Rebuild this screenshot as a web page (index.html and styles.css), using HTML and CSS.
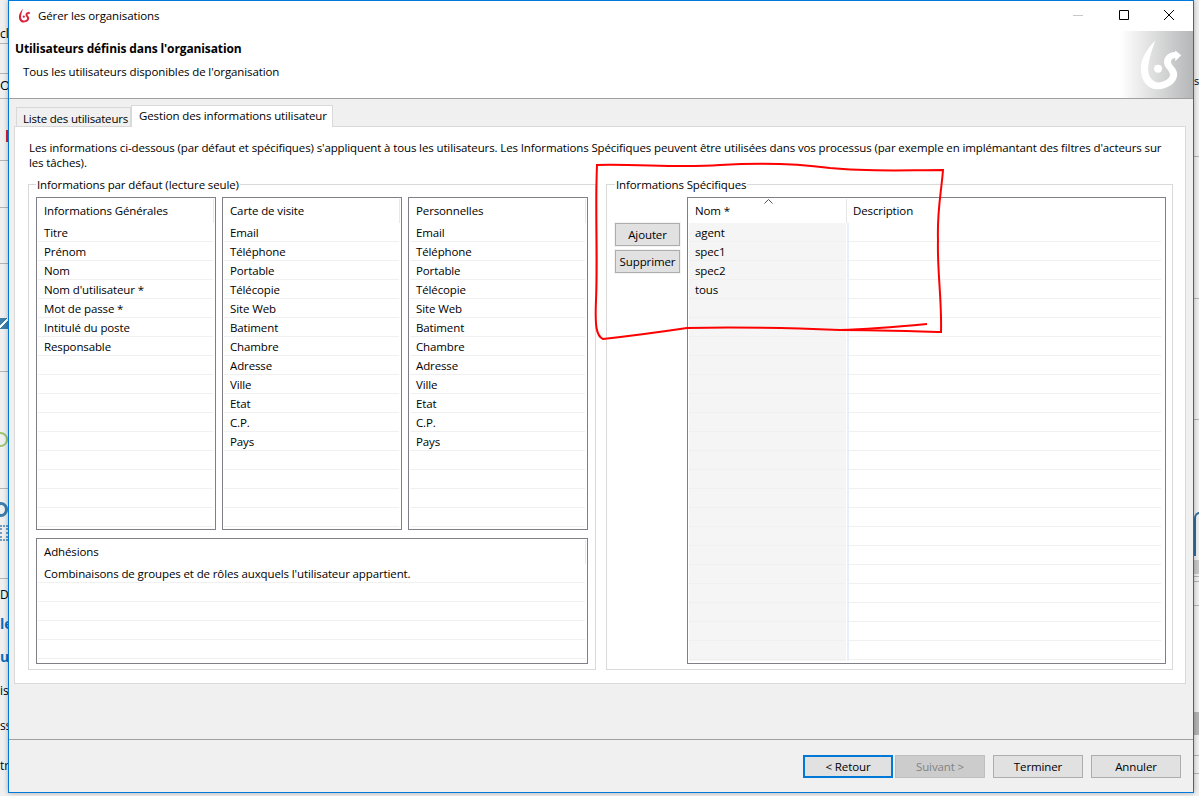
FILE: index.html
```html
<!DOCTYPE html>
<html lang="fr">
<head>
<meta charset="utf-8">
<title>Gérer les organisations</title>
<link rel="stylesheet" href="styles.css">
</head>
<body>
<div class="desktop">
  <div class="bit line l1"></div><div class="bit line l2"></div><div class="bit line l3"></div><div class="bit line l4"></div><div class="bit line l5"></div><div class="bit line l6"></div><div class="bit line l7"></div><div class="bit line l8"></div><div class="bit line l9"></div>
  <div class="bit frag f1">cl</div><div class="bit frag f2">O</div><div class="bit frag f3">De</div><div class="bit frag f4 blue">le</div><div class="bit frag f5 blue">un</div><div class="bit frag f6">is</div><div class="bit frag f7">ss</div><div class="bit frag f8">tr</div>
  <div class="bit redmark"></div>
  <div class="bit mailicon"></div>
  <div class="bit greenicon"></div>
  <div class="bit ringicon"></div>
  <div class="bit snowicon"></div>
  <div class="bit frag f9">s</div>
  <div class="bit line r1"></div><div class="bit line r2"></div><div class="bit line r3"></div><div class="bit line r4"></div><div class="bit line r5"></div><div class="bit line r6"></div><div class="bit line r7"></div><div class="bit line r8"></div>
  <div class="bit rcurve"></div><div class="bit rblock1"></div><div class="bit rblock2"></div>

  <div class="window">
    <div class="titlebar">
      <svg class="app-icon" viewBox="0 0 135 160" aria-hidden="true"><path class="logo-red" d="M52 7C30 30 8 60 8 92C8 130 30 155 58 155C92 155 118 132 118 110C118 92 100 84 99 72C99 64 106 60 112 60L112 70L130 52L112 38L112 42C92 42 78 56 78 72C78 92 96 96 96 112C96 124 76 134 60 134C44 134 30 116 30 96C30 68 44 30 52 7Z"/><circle class="logo-red" cx="60" cy="93" r="12"/></svg>
      <span class="window-title">Gérer les organisations</span>
      <div class="controls">
        <span class="ctl"><svg viewBox="0 0 10 10" class="ctl-svg"><path class="min" d="M0 5.5h10"/></svg></span>
        <span class="ctl"><svg viewBox="0 0 10 10" class="ctl-svg"><path class="max" d="M.5.5h9v9h-9z"/></svg></span>
        <span class="ctl"><svg viewBox="0 0 10 10" class="ctl-svg"><path class="max" d="M0 0l10 10M10 0L0 10"/></svg></span>
      </div>
    </div>
    <header class="banner">
      <div class="banner-text">
        <h1>Utilisateurs définis dans l'organisation</h1>
        <p>Tous les utilisateurs disponibles de l'organisation</p>
      </div>
      <div class="banner-logo">
        <svg class="big-logo" viewBox="0 0 135 160" aria-hidden="true"><path class="logo-white" d="M52 7C30 30 8 60 8 92C8 130 30 155 58 155C92 155 118 132 118 110C118 92 100 84 99 72C99 64 106 60 112 60L112 70L130 52L112 38L112 42C92 42 78 56 78 72C78 92 96 96 96 112C96 124 76 134 60 134C44 134 30 116 30 96C30 68 44 30 52 7Z"/><circle class="logo-white" cx="60" cy="93" r="12"/></svg>
      </div>
    </header>
    <main class="main">
      <div class="tabs">
        <div class="tab">Liste des utilisateurs</div>
        <div class="tab active">Gestion des informations utilisateur</div>
      </div>
      <section class="panel">
        <p class="intro">Les informations ci-dessous (par défaut et spécifiques) s'appliquent à tous les utilisateurs. Les Informations Spécifiques peuvent être utilisées dans vos processus (par exemple en implémantant des filtres d'acteurs sur<br>les tâches).</p>
        <div class="groups">
          <fieldset class="group defaults">
            <legend>Informations par défaut (lecture seule)</legend>
            <div class="three">
              <div class="box">
                <div class="box-head">Informations Générales</div>
                <div class="rows">
                  <div class="row">Titre</div><div class="row">Prénom</div><div class="row">Nom</div><div class="row">Nom d'utilisateur *</div><div class="row">Mot de passe *</div><div class="row">Intitulé du poste</div><div class="row">Responsable</div>
                </div>
              </div>
              <div class="box">
                <div class="box-head">Carte de visite</div>
                <div class="rows">
                  <div class="row">Email</div><div class="row">Téléphone</div><div class="row">Portable</div><div class="row">Télécopie</div><div class="row">Site Web</div><div class="row">Batiment</div><div class="row">Chambre</div><div class="row">Adresse</div><div class="row">Ville</div><div class="row">Etat</div><div class="row">C.P.</div><div class="row">Pays</div>
                </div>
              </div>
              <div class="box">
                <div class="box-head">Personnelles</div>
                <div class="rows">
                  <div class="row">Email</div><div class="row">Téléphone</div><div class="row">Portable</div><div class="row">Télécopie</div><div class="row">Site Web</div><div class="row">Batiment</div><div class="row">Chambre</div><div class="row">Adresse</div><div class="row">Ville</div><div class="row">Etat</div><div class="row">C.P.</div><div class="row">Pays</div>
                </div>
              </div>
            </div>
            <div class="box member">
              <div class="box-head">Adhésions</div>
              <div class="rows">
                <div class="row">Combinaisons de groupes et de rôles auxquels l'utilisateur appartient.</div>
              </div>
            </div>
          </fieldset>
          <fieldset class="group specifics">
            <legend>Informations Spécifiques</legend>
            <div class="spec-body">
              <div class="side-buttons">
                <button class="btn small" type="button">Ajouter</button>
                <button class="btn small" type="button">Supprimer</button>
              </div>
              <div class="box table">
                <div class="table-head">
                  <div class="th name">Nom *<svg class="sort" viewBox="0 0 9 5" aria-hidden="true"><path d="M.5 4.5l4-4 4 4"/></svg></div>
                  <div class="th">Description</div>
                </div>
                <div class="table-body">
                  <div class="col-name rows">
                    <div class="row">agent</div><div class="row">spec1</div><div class="row">spec2</div><div class="row">tous</div>
                  </div>
                  <div class="col-desc rows"></div>
                </div>
              </div>
            </div>
          </fieldset>
        </div>
      </section>
    </main>
    <footer class="footer">
      <button class="btn wide primary" type="button">&lt; Retour</button>
      <button class="btn wide disabled" type="button">Suivant &gt;</button>
      <button class="btn wide spaced" type="button">Terminer</button>
      <button class="btn wide spaced" type="button">Annuler</button>
    </footer>
  </div>
  <svg class="scribble" viewBox="0 0 1199 796" aria-hidden="true">
    <path d="M597 165C640 164 680 168 720 165C770 162 800 164 830 168C870 172 905 170 943 170C941 195 937 210 938 240C937 270 942 300 941 332C905 331 870 330 840 330C790 328 730 327 687 328C660 332 630 336 603 339C596 336 595 325 596 300C598 260 595 210 597 165Z"/>
    <path d="M840 330C870 329 905 326 927 324"/>
  </svg>
</div>
</body>
</html>
```
FILE: styles.css
```css
* { box-sizing: border-box; }
html, body { margin: 0; height: 100%; }
body { overflow: hidden; font: 11.5px/15px "Open Sans", "Noto Sans", sans-serif; letter-spacing: -.12px; color: #000; }
.desktop { position: relative; width: 1199px; height: 796px; background: #f0f0f0; overflow: hidden; }

/* Fragments of the application behind the dialog */
.bit { position: absolute; }
.line { height: 1px; background: #b4b4b4; }
.l1 { left: 0; width: 8px; top: 43px; } .l2 { left: 0; width: 8px; top: 73px; } .l3 { left: 0; width: 8px; top: 98px; }
.l4 { left: 0; width: 8px; top: 160px; } .l5 { left: 0; width: 8px; top: 207px; } .l6 { left: 0; width: 8px; top: 263px; }
.l7 { left: 0; width: 8px; top: 371px; } .l8 { left: 0; width: 8px; top: 488px; } .l9 { left: 0; width: 8px; top: 578px; }
.frag { left: 0; font-size: 12px; white-space: nowrap; }
.f1 { top: 26px; } .f2 { top: 78px; font-size: 13px; } .f3 { top: 587px; } .f6 { top: 683px; } .f7 { top: 718px; } .f8 { top: 758px; }
.f4 { top: 616px; font-size: 14px; font-weight: 700; } .f5 { top: 649px; font-size: 14px; font-weight: 700; }
.blue { color: #0a6ebd; }
.f9 { left: 1194px; top: 73px; font-size: 11px; }
.redmark { left: 6px; top: 130px; width: 3px; height: 12px; background: #d42030; }
.mailicon { left: 0; top: 318px; width: 8px; height: 11px; background: linear-gradient(135deg, #3d7eaa 40%, #fff 40% 55%, #3d7eaa 55%); }
.greenicon { left: -7px; top: 432px; width: 15px; height: 15px; border: 2px solid #9cc56e; border-radius: 50%; }
.ringicon { left: -6px; top: 502px; width: 14px; height: 15px; border: 3px solid #3d7eaa; border-radius: 50%; }
.snowicon { left: 0; top: 525px; width: 8px; height: 16px; border: 2px dotted #6f9cc0; }
.r1 { left: 1194px; width: 5px; top: 156px; } .r2 { left: 1194px; width: 5px; top: 298px; } .r3 { left: 1194px; width: 5px; top: 419px; }
.r4 { left: 1194px; width: 5px; top: 576px; } .r5 { left: 1194px; width: 5px; top: 581px; } .r6 { left: 1194px; width: 5px; top: 605px; }
.r7 { left: 1194px; width: 5px; top: 755px; } .r8 { left: 1194px; width: 5px; top: 773px; }
.rcurve { left: 1194px; top: 512px; width: 8px; height: 44px; border: 2px solid #2f6c9e; border-right: 0; border-bottom: 0; border-top-left-radius: 6px; }
.rblock1 { left: 1194px; top: 560px; width: 5px; height: 14px; background: #c8c8c8; }
.rblock2 { left: 1194px; top: 712px; width: 5px; height: 23px; background: #b4b4b4; }

/* Dialog window */
.window { position: absolute; left: 8px; top: 0; width: 1186px; height: 793px; display: flex; flex-direction: column; background: #f0f0f0; border: 1px solid #0078d7; box-shadow: 0 0 5px rgba(0, 0, 0, .3); }
.titlebar { display: flex; align-items: center; height: 30px; flex: none; background: #fff; padding: 0 1px 2px 9px; }
.app-icon { width: 13px; height: 15px; flex: none; margin-right: 7px; }
.logo-red { fill: #d9213a; }
.logo-white { fill: #fff; }
.window-title { flex: 1; }
.controls { display: flex; }
.ctl { width: 45.5px; display: flex; justify-content: center; }
.ctl-svg { width: 10px; height: 10px; display: block; }
.min { stroke: #c8c8c8; stroke-width: 1; fill: none; }
.max { stroke: #000; stroke-width: 1; fill: none; }

.banner { display: flex; height: 68px; flex: none; background: #fff; border-bottom: 1px solid #a0a0a0; }
.banner-text { flex: 1; padding: 10px 0 0 6px; }
h1 { margin: 0; font-size: 12px; line-height: 15px; font-weight: 700; }
.banner-text p { margin: 8px 0 0 8px; }
.banner-logo { width: 73px; display: flex; align-items: center; justify-content: center; background: linear-gradient(90deg, #fff, #e6e6e6 35%, #b5b6b8); padding-left: 8px; }
.big-logo { width: 45px; height: 53px; display: block; }

.main { flex: 1; display: flex; flex-direction: column; min-height: 0; padding: 6px 7px 55px 5px; }
.tabs { display: flex; height: 22px; padding-left: 2px; flex: none; position: relative; z-index: 1; margin-bottom: -1px; }
.tab { margin-top: 2px; width: 115px; padding: 3px 0 0 6px; border: 1px solid #d9d9d9; border-bottom: 0; white-space: nowrap; letter-spacing: -.2px; }
.tab.active { margin-top: 0; width: 202px; padding: 2px 0 0 7px; background: #fff; letter-spacing: -.12px; }
.panel { flex: 1; min-height: 0; display: flex; flex-direction: column; background: #fff; border: 1px solid #d9d9d9; padding: 13px 12px 13px 13px; }
.intro { margin: 0 0 6px 1px; flex: none; white-space: nowrap; }
.groups { flex: 1; min-height: 0; display: flex; gap: 10px; }
fieldset.group { margin: 0; min-width: 0; border: 1px solid #d9d9d9; display: flex; flex-direction: column; }
legend { padding: 1px 1px 0; margin-left: 0; line-height: 15px; }
.defaults { width: 568px; flex: none; padding: 5px 7px 5px 7px; }
.specifics { flex: 1; padding: 5px 6px 5px 8px; }
.three { display: flex; gap: 6px; height: 333px; flex: none; margin-bottom: 8px; }
.box { flex: 1; min-width: 0; display: flex; flex-direction: column; border: 1px solid #7f8087; padding: 1px; overflow: hidden; }
.box-head { flex: none; height: 24px; padding: 4px 0 0 6px; border-right: 1px solid #e8e8e8; }
.rows { flex: 1; min-height: 0; background-image: repeating-linear-gradient(transparent 0 18px, #f0f0f0 18px 19px); }
.box > .rows { margin-right: 1px; }
.row { height: 19px; padding: 2px 0 0 6px; white-space: nowrap; }
.member { flex: 1; }

.spec-body { flex: 1; min-height: 0; display: flex; gap: 7px; height: 100%; }
.side-buttons { width: 65px; flex: none; display: flex; flex-direction: column; gap: 4px; padding-top: 26px; }
.btn { font: inherit; letter-spacing: inherit; color: #000; background: #e1e1e1; border: 1px solid #adadad; padding: 0; margin: 0; }
.btn.small { height: 23px; box-shadow: 0 0 0 1px #f4f4f4; }
.table { padding: 1px; }
.table-head { display: flex; flex: none; height: 24px; }
.th { padding: 4px 0 0 6px; flex: 1; }
.th.name { position: relative; flex: none; width: 158px; border-right: 1px solid #e5e5e5; }
.sort { position: absolute; left: 75px; top: 0; width: 9px; height: 5px; fill: none; stroke: #555; stroke-width: 1; }
.table-body { flex: 1; min-height: 0; display: flex; margin-bottom: 1px; }
.col-name { flex: none; width: 157px; background-color: #f5f5f5; margin-left: 0; }
.col-desc { flex: 1; margin-left: 3px; margin-right: 3px; box-shadow: -2px 0 0 #e9eef8; }

.footer { flex: none; height: 53px; display: flex; align-items: flex-start; justify-content: flex-end; padding: 15px 12px 0 0; border-top: 1px solid #a0a0a0; }
.btn.wide { width: 90px; height: 23px; }
.primary { border: 2px solid #0078d7; margin-right: 2px; }
.disabled { background: #ccc; border-color: #bfbfbf; color: #838383; }
.spaced { margin-left: 8px; }

.scribble { position: absolute; left: 0; top: 0; width: 1199px; height: 796px; pointer-events: none; fill: none; stroke: #f00; stroke-width: 2; }
```
